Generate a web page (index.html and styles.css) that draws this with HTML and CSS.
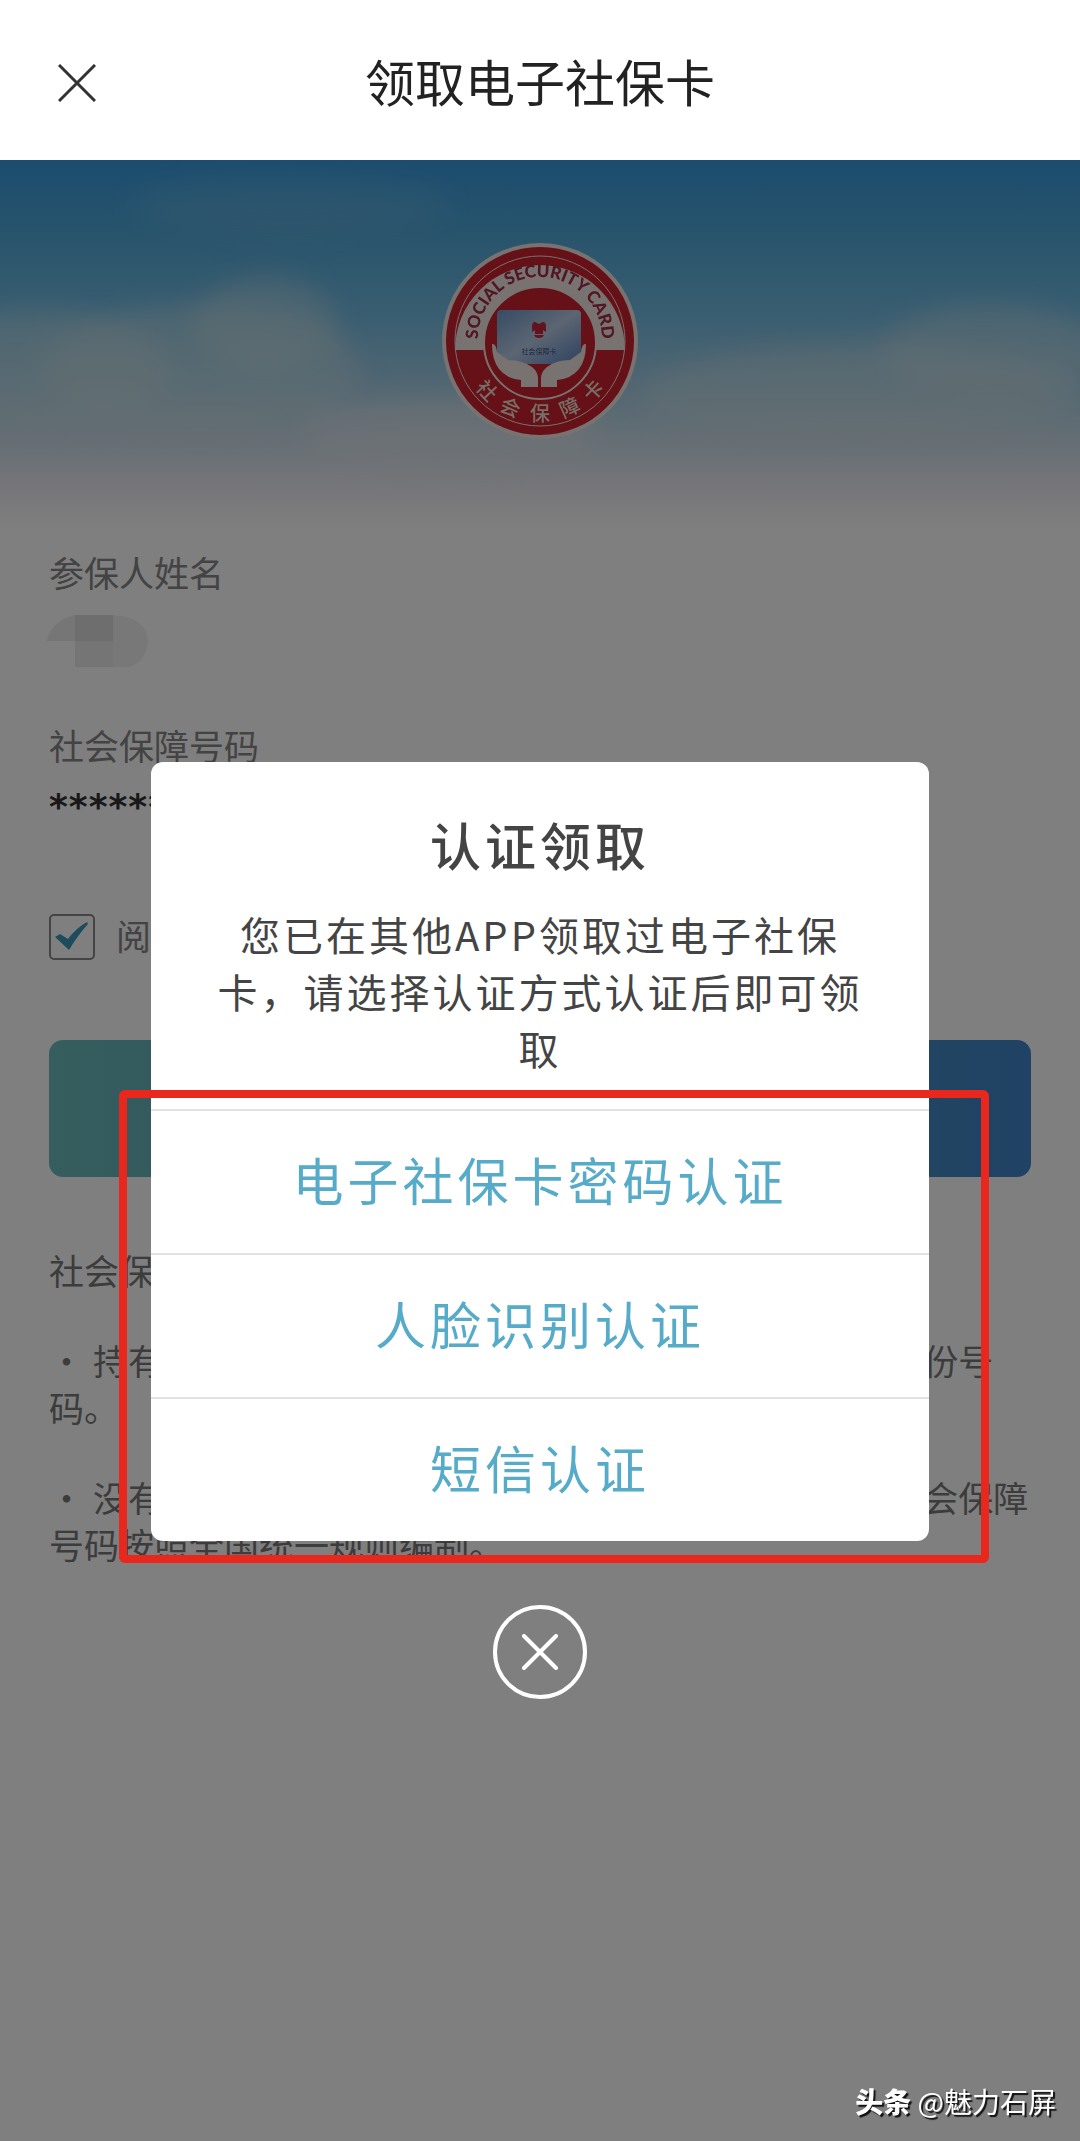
FILE: index.html
```html
<!DOCTYPE html>
<html lang="zh-CN">
<head>
    <meta charset="UTF-8">
    <meta name="viewport" content="width=device-width, initial-scale=1.0">
    <title>领取电子社保卡</title>
    <link rel="stylesheet" href="styles.css">
</head>
<body>
    <header class="navbar">
        <button class="nav-close" type="button" aria-label="关闭">
            <svg viewBox="0 0 38 38"><path d="M1 1L37 37M37 1L1 37"/></svg>
        </button>
        <h1>领取电子社保卡</h1>
    </header>
    <main>
        <div class="banner">
            <svg class="sky" viewBox="0 0 1080 370" preserveAspectRatio="none" aria-hidden="true">
                <defs>
                    <linearGradient id="skyFill" x1="0" y1="0" x2="0" y2="1">
                        <stop offset="0" stop-color="#389ade"/>
                        <stop offset=".2" stop-color="#50a8d8"/>
                        <stop offset=".42" stop-color="#74bce2"/>
                        <stop offset=".6" stop-color="#a0cce4"/>
                        <stop offset=".75" stop-color="#c8dce8"/>
                        <stop offset=".88" stop-color="#ececf2"/>
                        <stop offset="1" stop-color="#ffffff"/>
                    </linearGradient>
                    <filter id="soft" x="-20%" y="-20%" width="140%" height="140%">
                        <feGaussianBlur stdDeviation="12"/>
                    </filter>
                </defs>
                <rect width="1080" height="370" fill="url(#skyFill)"/>
                <g fill="#cfe0e4" filter="url(#soft)">
                    <ellipse cx="265" cy="165" rx="72" ry="48" opacity=".4"/>
                    <ellipse cx="200" cy="210" rx="160" ry="66" opacity=".4"/>
                    <ellipse cx="40" cy="210" rx="130" ry="60" opacity=".4"/>
                    <ellipse cx="990" cy="190" rx="110" ry="46" opacity=".4"/>
                    <ellipse cx="860" cy="235" rx="220" ry="50" opacity=".45"/>
                    <ellipse cx="450" cy="275" rx="150" ry="36" opacity=".5" fill="#e6e8ee"/>
                    <ellipse cx="290" cy="45" rx="160" ry="30" opacity=".12"/>
                </g>
            </svg>
            <svg class="emblem" viewBox="0 0 220 220" role="img" aria-label="社会保障卡">
                <defs>
                    <path id="topArc" d="M49 119A62 62 0 1 1 171 119"/>
                    <linearGradient id="cardFill" x1="0" y1="0" x2="1" y2="1">
                        <stop offset="0" stop-color="#6e98c8"/>
                        <stop offset=".5" stop-color="#b8cce6"/>
                        <stop offset="1" stop-color="#5c84c0"/>
                    </linearGradient>
                </defs>
                <circle cx="110" cy="110" r="98" fill="#f0e4e0"/>
                <circle cx="110" cy="110" r="94" fill="#cc222e"/>
                <path d="M25 119A85 85 0 1 1 195 119Z" fill="#f0e4e0"/>
                <circle cx="110" cy="110" r="85" fill="none" stroke="#f0e4e0" stroke-width="1"/>
                <circle cx="110" cy="112" r="56" fill="#cc222e" stroke="#f0e4e0" stroke-width="2"/>
                <text class="ring-en"><textPath href="#topArc" startOffset="50%">SOCIAL SECURITY CARD</textPath></text>
                <g class="ring-cn">
                    <text x="110" y="190" transform="rotate(47 110 110)">社</text>
                    <text x="110" y="190" transform="rotate(24 110 110)">会</text>
                    <text x="110" y="190">保</text>
                    <text x="110" y="190" transform="rotate(-24 110 110)">障</text>
                    <text x="110" y="190" transform="rotate(-47 110 110)">卡</text>
                </g>
                <rect x="67" y="79" width="84" height="54" rx="4" fill="url(#cardFill)"/>
                <path d="M102 101v-5q0-5 3-5l4 2 4-2q3 0 3 5v5l-3-2v4h-8v-4zM104 104h10q-1 3-5 3t-5-3z" fill="#c82436"/>
                <text class="card-text" x="109" y="123" font-size="7">社会保障卡</text>
                <path d="M62 113q4-1 5 8l11 8q14 0 24 7q6 5 6 11v9H91v-7q-14-1-22-11q-7-9-7-25z" fill="#f0e4e0"/>
                <path d="M156 113q-4-1-5 8l-11 8q-14 0-23 7q-6 5-6 11v9h16v-7q14-1 22-11q7-9 7-25z" fill="#f0e4e0"/>
            </svg>
        </div>
        <form class="apply">
            <p class="label">参保人姓名</p>
            <svg class="mosaic" viewBox="0 0 102 52" aria-hidden="true">
                <path d="M0 26Q4 6 28 0V26Z" fill="#ededed"/>
                <path d="M28 0H66V26H28Z" fill="#dcdcdc"/>
                <path d="M28 26H66V52H28Z" fill="#ebebeb"/>
                <path d="M66 0Q101 2 101 28Q97 50 80 52H66Z" fill="#f0f0f0"/>
            </svg>
            <p class="label">社会保障号码</p>
            <p class="number">******************</p>
            <div class="agree">
                <input type="checkbox" id="agree" checked>
                <label for="agree">阅读并同意</label>
            </div>
            <button class="submit" type="button" aria-label="领取"></button>
            <div class="notes">
                <h2>社会保障号码说明</h2>
                <p><span class="dot">•</span>持有居民身份证的中国公民，&ensp; 社会保障号码为公民身份号<br>码。</p>
                <p><span class="dot">•</span>没有居民身份证的参加社会保险人员，&ensp; 号码为其的社会保障<br>号码按照全国统一规则编制。</p>
            </div>
        </form>
        <div class="mask">
            <div class="modal" role="dialog" aria-labelledby="modalTitle">
                <h2 id="modalTitle">认证领取</h2>
                <p>您已在其他APP领取过电子社保<br>卡，请选择认证方式认证后即可领<br>取</p>
                <div class="options">
                    <button type="button">电子社保卡密码认证</button>
                    <button type="button">人脸识别认证</button>
                    <button type="button">短信认证</button>
                    <div class="frame"></div>
                </div>
            </div>
            <button class="modal-close" type="button" aria-label="关闭弹窗">
                <svg viewBox="0 0 36 36"><path d="M2 2L34 34M34 2L2 34"/></svg>
            </button>
        </div>
        <div class="watermark"><b>头条</b> @魅力石屏</div>
    </main>
</body>
</html>
```
FILE: styles.css
```css
* {
    box-sizing: border-box;
}

body {
    margin: 0;
    min-height: 100vh;
    display: flex;
    flex-direction: column;
    font-family: "Noto Sans CJK SC", sans-serif;
    background-color: #fff;
}

h1, h2, p {
    margin: 0;
    font-weight: 400;
}

button {
    padding: 0;
    border: none;
    background: none;
    font-family: inherit;
    cursor: pointer;
}

.navbar {
    position: relative;
    height: 160px;
    display: flex;
    align-items: center;
    justify-content: center;
}

.navbar h1 {
    font-size: 50px;
    line-height: 72px;
    color: #222;
}

.nav-close {
    position: absolute;
    left: 58px;
    top: 64px;
    width: 38px;
    height: 38px;
}

.nav-close svg {
    display: block;
    fill: none;
    stroke: #333;
    stroke-width: 3;
}

main {
    position: relative;
    flex: 1;
}

.banner {
    position: relative;
    height: 370px;
    display: flex;
    align-items: center;
    justify-content: center;
    padding-bottom: 8px;
}

.sky {
    position: absolute;
    inset: 0;
    width: 100%;
    height: 100%;
}

.emblem {
    position: relative;
    width: 220px;
    height: 220px;
}

.ring-en {
    font-family: Lato, sans-serif;
    font-size: 17px;
    font-weight: 900;
    fill: #a02c48;
    text-anchor: middle;
}

.ring-cn {
    font-size: 20px;
    font-weight: 500;
    fill: #f0dcd0;
    text-anchor: middle;
}

.card-text {
    fill: #3c4c80;
    text-anchor: middle;
}

.apply {
    padding: 18px 49px 0;
}

.label {
    font-size: 35px;
    line-height: 48px;
    color: #868686;
}

.mosaic {
    display: block;
    width: 102px;
    height: 52px;
    margin: 19px 0 54px -2px;
}

.number {
    margin-top: 14px;
    font-family: "DejaVu Sans", sans-serif;
    font-size: 36px;
    line-height: 48px;
    font-weight: 700;
    letter-spacing: 1px;
    color: #333;
}

.agree {
    display: flex;
    align-items: center;
    gap: 21px;
    margin-top: 83px;
    font-size: 35px;
    line-height: 48px;
    color: #868686;
}

.agree label {
    margin-top: -4px;
}

.agree input {
    appearance: none;
    width: 46px;
    height: 46px;
    margin: 0;
    border: 2px solid #888;
    border-radius: 5px;
    background: url("data:image/svg+xml,%3Csvg xmlns='http://www.w3.org/2000/svg' viewBox='0 0 42 42'%3E%3Cpath d='M4 21l5-3 8 5Q25 12 36 6l1 2Q27 19 18 34z' fill='%233c98b8'/%3E%3C/svg%3E") center / contain no-repeat;
}

.submit {
    display: block;
    width: 100%;
    height: 137px;
    margin-top: 80px;
    border-radius: 14px;
    background: linear-gradient(to right, #6cbcbc, #4084c8);
}

.notes {
    margin-top: 69px;
    font-size: 35px;
    line-height: 47px;
    color: #787878;
    white-space: nowrap;
}

.notes h2 {
    font-size: 35px;
}

.notes p {
    margin-top: 43px;
}

.dot {
    display: inline-block;
    width: 34px;
    margin-right: 10px;
    text-align: center;
}

.mask {
    position: absolute;
    inset: 0;
    padding-top: 602px;
    display: flex;
    flex-direction: column;
    align-items: center;
    background-color: rgba(0, 0, 0, 0.5);
}

.modal {
    width: 72%;
    padding-top: 46px;
    border-radius: 12px;
    background-color: #fff;
    text-align: center;
    color: #444;
}

.modal h2 {
    font-size: 51px;
    line-height: 72px;
    font-weight: 500;
    letter-spacing: 4px;
}

.modal p {
    margin-top: 26px;
    font-size: 40px;
    line-height: 57px;
    letter-spacing: 3px;
    white-space: nowrap;
}

.options {
    position: relative;
    margin-top: 32px;
}

.options button {
    display: block;
    width: 100%;
    height: 144px;
    padding-bottom: 6px;
    border-top: 2px solid #e2e2e2;
    font-size: 51px;
    letter-spacing: 4px;
    color: #56abc8;
}

/* red box around the three ways to verify */
.frame {
    position: absolute;
    top: -19px;
    right: -60px;
    bottom: -22px;
    left: -32px;
    border: 8px solid #e9271c;
    border-radius: 6px;
    pointer-events: none;
}

.modal-close {
    display: flex;
    align-items: center;
    justify-content: center;
    width: 94px;
    height: 94px;
    margin-top: 64px;
    border: 4px solid #fff;
    border-radius: 50%;
}

.modal-close svg {
    width: 36px;
    height: 36px;
    fill: none;
    stroke: #fff;
    stroke-width: 4;
    stroke-linecap: round;
}

.watermark {
    position: absolute;
    right: 24px;
    bottom: 20px;
    font-size: 28px;
    line-height: 40px;
    color: #fff;
    text-shadow: 2px 2px 1px #111;
}

.watermark b {
    font-weight: 900;
}
```
